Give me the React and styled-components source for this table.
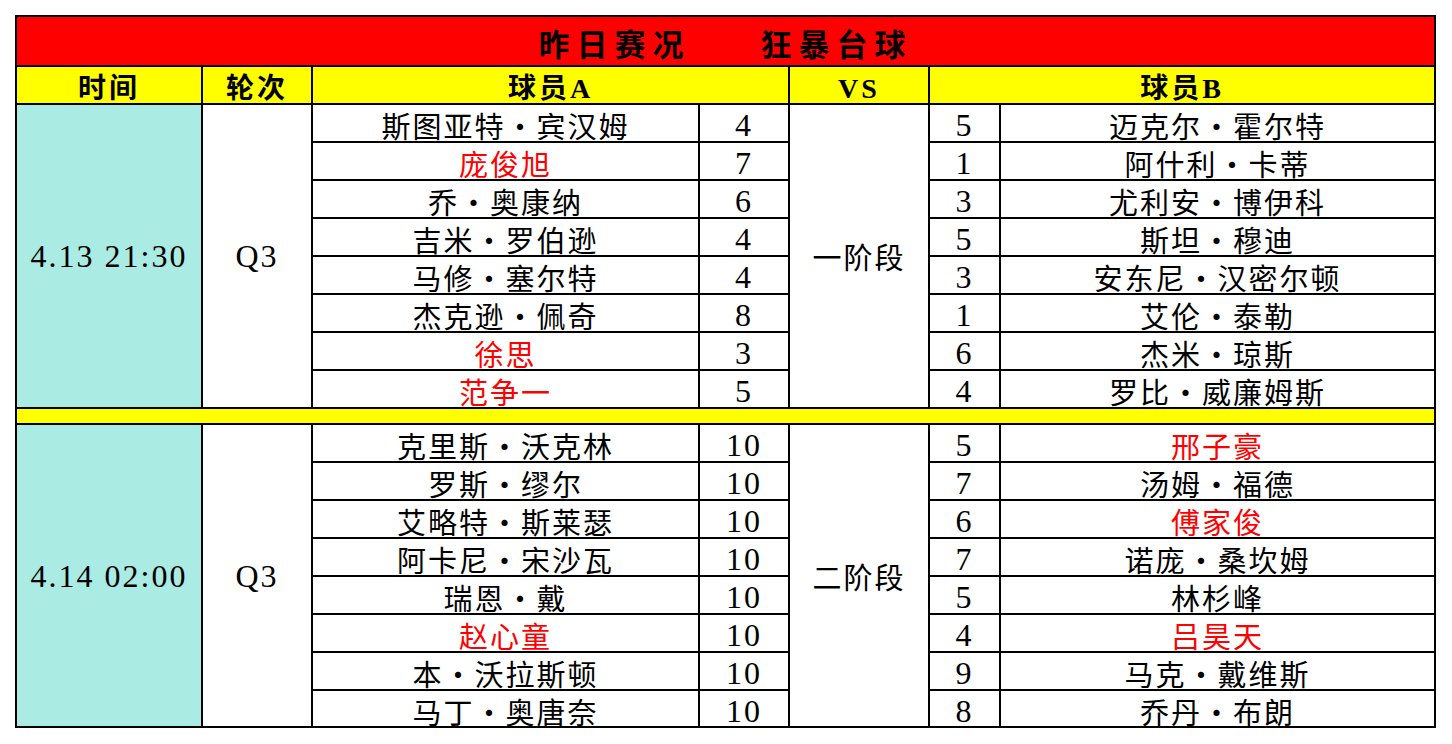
import React from 'react'
import styled, { createGlobalStyle } from 'styled-components'

const GlobalStyle = createGlobalStyle`
  body {
    margin: 0;
    background: #ffffff;
    font-family: "Liberation Serif", "Noto Sans CJK SC", serif;
  }
`

const Page = styled.div`
  padding: 15px;
`

const Sheet = styled.div`
  display: grid;
  width: max-content;
  grid-template-columns: 184px 108px 385px 88px 138px 69px 433px;
  grid-template-rows: 48px 36px repeat(8, 36px) 14px repeat(7, 36px) 35px;
  gap: 2px;
  padding: 2px;
  background: #000000;
`

const Cell = styled.div`
  display: flex;
  justify-content: center;
  align-items: ${(p) => (p.$middle ? 'center' : 'flex-start')};
  background: ${(p) => p.$bg || '#ffffff'};
  color: ${(p) => (p.$red ? '#ff0000' : '#000000')};
  grid-column: ${(p) => p.$col || 'auto'};
  grid-row: ${(p) => p.$row || 'auto'};
  white-space: pre;
`

const Title = styled(Cell)`
  grid-column: 1 / -1;
  background: #ff0000;
  font-family: "Noto Sans CJK SC", sans-serif;
  font-size: 31px;
  font-weight: 700;
  letter-spacing: 7px;
  line-height: 40px;
  padding-top: 6px;
`

const Head = styled(Cell)`
  background: #ffff00;
  font-family: "Liberation Serif", "Noto Sans CJK SC", serif;
  font-size: 28px;
  font-weight: 700;
  letter-spacing: 3px;
  line-height: 29px;
  padding-top: 7px;
`

const Name = styled(Cell)`
  font-family: "Noto Sans CJK SC", sans-serif;
  font-size: 29px;
  letter-spacing: 2px;
  line-height: 32px;
  padding-top: 4px;
`

const Num = styled(Cell)`
  font-family: "Liberation Serif", serif;
  font-size: 32px;
  letter-spacing: 2px;
  line-height: 31px;
  padding-top: 5px;
`

const Big = styled(Cell)`
  font-family: "Liberation Serif", "Noto Sans CJK SC", serif;
  font-size: 32px;
  letter-spacing: 2px;
  line-height: 36px;
`

const Stage = styled(Big)`
  font-family: "Noto Sans CJK SC", sans-serif;
  font-size: 29px;
`

const Gap = styled.div`
  grid-column: 1 / -1;
  background: #ffff00;
`

const blocks = [
  {
    time: '4.13 21:30',
    round: 'Q3',
    stage: '一阶段',
    rows: [
      ['斯图亚特•宾汉姆', 4, 5, '迈克尔•霍尔特'],
      ['庞俊旭', 7, 1, '阿什利•卡蒂', 'a'],
      ['乔•奥康纳', 6, 3, '尤利安•博伊科'],
      ['吉米•罗伯逊', 4, 5, '斯坦•穆迪'],
      ['马修•塞尔特', 4, 3, '安东尼•汉密尔顿'],
      ['杰克逊•佩奇', 8, 1, '艾伦•泰勒'],
      ['徐思', 3, 6, '杰米•琼斯', 'a'],
      ['范争一', 5, 4, '罗比•威廉姆斯', 'a'],
    ],
  },
  {
    time: '4.14 02:00',
    round: 'Q3',
    stage: '二阶段',
    rows: [
      ['克里斯•沃克林', 10, 5, '邢子豪', 'b'],
      ['罗斯•缪尔', 10, 7, '汤姆•福德'],
      ['艾略特•斯莱瑟', 10, 6, '傅家俊', 'b'],
      ['阿卡尼•宋沙瓦', 10, 7, '诺庞•桑坎姆'],
      ['瑞恩•戴', 10, 5, '林杉峰'],
      ['赵心童', 10, 4, '吕昊天', 'ab'],
      ['本•沃拉斯顿', 10, 9, '马克•戴维斯'],
      ['马丁•奥唐奈', 10, 8, '乔丹•布朗'],
    ],
  },
]

function Block({ block, start }) {
  const span = `${start} / span 8`
  return (
    <>
      <Big $middle $bg="#aaebe4" $col="1" $row={span}>{block.time}</Big>
      <Big $middle $col="2" $row={span}>{block.round}</Big>
      <Stage $middle $col="5" $row={span}>{block.stage}</Stage>
      {block.rows.map(([a, sa, sb, b, red = ''], i) => (
        <React.Fragment key={i}>
          <Name $col="3" $row={start + i} $red={red.includes('a')}>{a}</Name>
          <Num $col="4" $row={start + i}>{sa}</Num>
          <Num $col="6" $row={start + i}>{sb}</Num>
          <Name $col="7" $row={start + i} $red={red.includes('b')}>{b}</Name>
        </React.Fragment>
      ))}
    </>
  )
}

export default function App() {
  return (
    <Page>
      <GlobalStyle />
      <Sheet>
        <Title>{'昨日赛况     狂暴台球'}</Title>
        <Head $col="1">时间</Head>
        <Head $col="2">轮次</Head>
        <Head $col="3 / span 2">球员A</Head>
        <Head $col="5">VS</Head>
        <Head $col="6 / span 2">球员B</Head>
        <Block block={blocks[0]} start={3} />
        <Gap style={{ gridRow: 11 }} />
        <Block block={blocks[1]} start={12} />
      </Sheet>
    </Page>
  )
}
